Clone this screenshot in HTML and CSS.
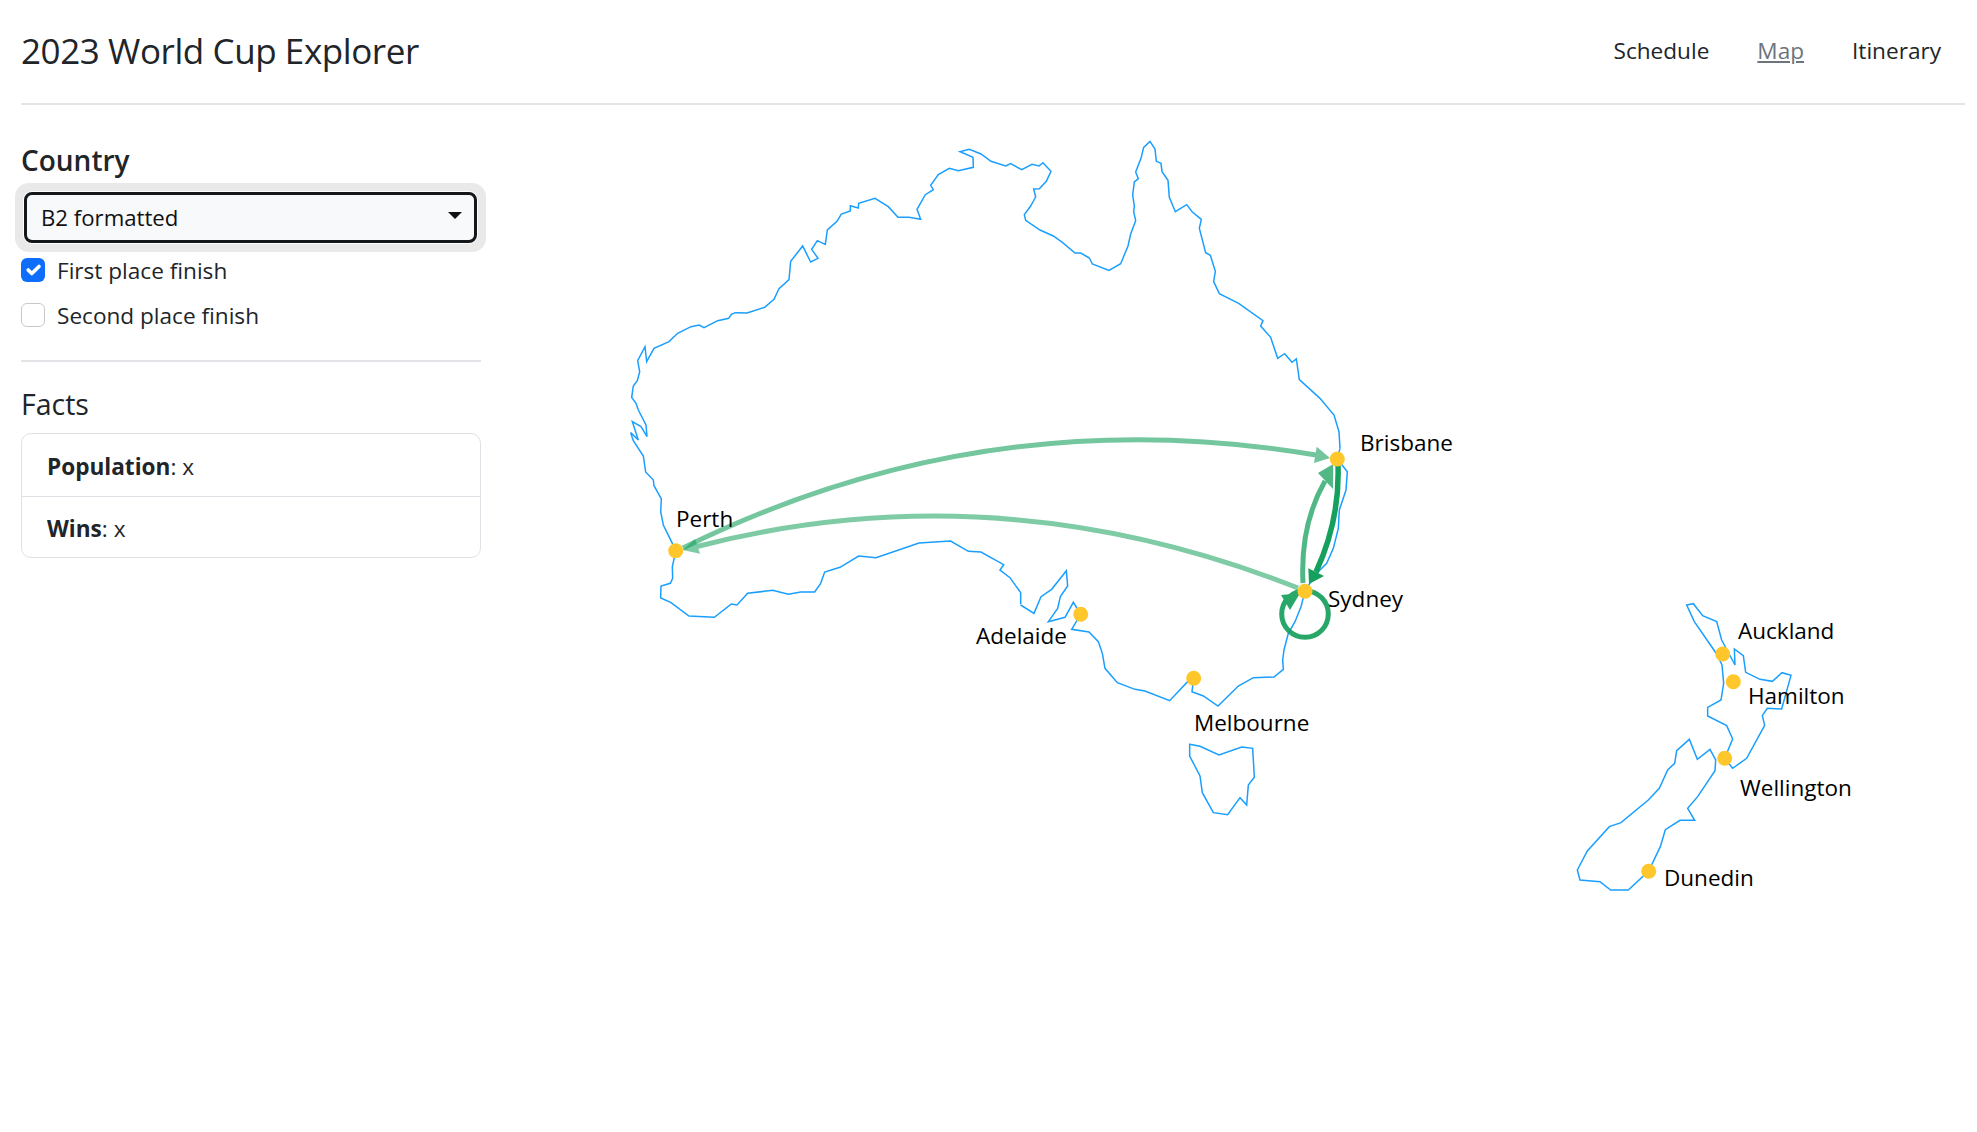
FILE: index.html

```html
<!DOCTYPE html>
<html lang="en">
<head>
  <meta charset="UTF-8">
  <meta name="viewport" content="width=device-width, initial-scale=1.0">
  <title>2023 World Cup Explorer</title>
  <link rel="stylesheet" href="styles.css">
</head>
<body>
  <header class="topbar">
    <div class="brand">2023 World Cup Explorer</div>
    <nav class="nav">
      <a href="#" class="nav-link">Schedule</a>
      <a href="#" class="nav-link active">Map</a>
      <a href="#" class="nav-link">Itinerary</a>
    </nav>
  </header>

  <div class="page">
    <aside class="sidebar">
      <h2 class="country-title">Country</h2>
      <div class="select-ring">
        <div class="select-box">
          <span>B2 formatted</span>
          <span class="caret"></span>
        </div>
      </div>
      <div class="check checked">
        <span class="check-box">
          <svg viewBox="0 0 20 20" width="24" height="24"><path d="M6 10l3 3l6-6" fill="none" stroke="#fff" stroke-width="3" stroke-linecap="round" stroke-linejoin="round"/></svg>
        </span>
        <label>First place finish</label>
      </div>
      <div class="check">
        <span class="check-box"></span>
        <label>Second place finish</label>
      </div>
      <hr class="divider">
      <h3 class="facts-title">Facts</h3>
      <ul class="facts">
        <li><strong>Population</strong>: x</li>
        <li><strong>Wins</strong>: x</li>
      </ul>
    </aside>

    <svg class="map" viewBox="500 105 1465 900" width="1465" height="900">
      <!-- traced in pieces, each piece in its own zoomed coordinates -->
      <g class="coast">
        <g transform="translate(610 130) scale(.33333)">
          <polyline points="62,908 85,930 67,875 93,890 111,920 108,885 85,840 78,820 65,802 70,768 82,752 89,725 83,692 105,650 110,695 132,655 177,635 203,610 243,590 268,585 282,593 323,572 356,565 364,553 376,548 411,549 464,532 492,508 507,476 537,449 542,394 578,348 602,396 624,385 605,358 622,332 646,343 652,300 681,274 694,252 721,243 721,227 745,234 746,220 795,205 835,230 864,262 897,262 932,268 921,238 946,194 970,179 962,166 985,134 1018,115 1045,122 1090,112 1089,82 1050,65 1078,58 1113,72 1143,94 1187,108 1202,101 1235,119 1266,103 1287,108 1299,98 1323,124 1309,154 1288,176 1271,177 1277,201 1262,228 1243,254 1247,271 1290,300 1330,318 1358,338 1395,369 1412,369 1438,384"/>
        </g>
        <g transform="translate(1000 130) scale(.33333)">
          <polyline points="268,384 277,402 327,421 362,401 384,348 392,312 407,272 401,245 403,228 398,195 403,156 415,146 407,126 423,85 431,52 450,34 465,57 469,94 483,100 486,125 504,151 508,202 526,245 560,224 577,246 604,268 598,295 617,368 631,376 646,424 641,455 658,491 716,520 789,572 782,588 812,622 833,685 854,671 876,697 889,687 898,749 960,805 1002,855 1017,905 1020,955"/>
        </g>
        <g transform="translate(1020 420) scale(.33333)">
          <polyline points="960,85 952,117 982,155 978,210 958,270 955,325 940,385 920,430 885,465 855,513 843,560 825,605 805,640 792,690 788,720 790,748 762,771 700,773 655,798 594,858 550,828 516,815 521,775 500,788 449,842 375,813 345,808 292,788 255,745 247,700 235,665 207,636 155,628 182,583 160,547 135,592 85,605 113,565 121,530 143,498 139,452 95,508 63,530 42,580 2,555"/>
          <polygon points="509,973 540,979 597,1005 665,981 698,985 703,1072 685,1095 680,1155 660,1133 623,1184 580,1178 547,1118 540,1068 509,1008"/>
        </g>
        <g transform="translate(610 420) scale(.33333)">
          <polyline points="1232,553 1232,518 1200,473 1170,450 1181,434 1113,396 1075,394 1022,363 927,369 798,413 746,408 690,442 644,456 632,490 614,516 572,516 535,523 488,511 413,520 381,555 364,552 313,592 237,588 182,547 152,534 153,498 181,490 188,475 187,440 193,413 197,392 187,370 160,315 152,275 154,237 132,197 130,180 107,156 100,108 70,62 62,38"/>
        </g>
        <g transform="translate(1560 580) scale(.33333)">
          <polygon points="380,75 400,71 428,107 470,125 485,180 525,255 523,207 550,227 557,277 600,298 637,304 666,278 693,286 665,387 622,385 607,407 614,436 560,535 518,565 494,535 518,477 500,437 443,408 443,382 483,360 491,310 486,255 470,222 403,125"/>
          <polygon points="388,478 412,538 450,508 467,540 465,572 413,650 383,685 404,721 360,721 316,749 301,800 266,873 205,930 152,930 120,905 60,900 52,870 82,813 148,740 183,728 265,660 298,625 323,570 344,550 350,512"/>
        </g>
      </g>

      <g class="route route-perth-bris">
        <path d="M683 548Q985 399 1316 455"/>
        <polygon points="1330,458 1316.700,446.700 1314,463"/>
      </g>
      <g class="route route-syd-perth">
        <path d="M1298 588Q998 469 695 547"/>
        <polygon points="682.700,550 700,553.700 695,539"/>
      </g>
      <g class="route route-syd-bris">
        <path d="M1303 583Q1300 525 1325 481"/>
        <polygon points="1333.300,464 1318,473 1333,489"/>
      </g>
      <g class="route route-bris-syd">
        <path d="M1338 465Q1340 520 1316 572"/>
        <polygon points="1309,584 1324,576 1308.300,568.300"/>
      </g>
      <g class="route route-loop">
        <circle cx="1305" cy="614" r="23.300"/>
        <polygon points="1300,593.300 1281,595 1290,610"/>
      </g>

      <g class="cities">
        <circle cx="675.700" cy="550.700" r="7.500"/>
        <circle cx="1080.700" cy="614.300" r="7.500"/>
        <circle cx="1193.700" cy="678.300" r="7.500"/>
        <circle cx="1305" cy="591.300" r="7.500"/>
        <circle cx="1337.300" cy="459" r="7.500"/>
        <circle cx="1722.700" cy="654" r="7.500"/>
        <circle cx="1733.300" cy="681.700" r="7.500"/>
        <circle cx="1724.700" cy="758.300" r="7.500"/>
        <circle cx="1648.700" cy="871.300" r="7.500"/>
      </g>

      <g class="labels">
        <text x="676" y="527">Perth</text>
        <text x="976" y="644">Adelaide</text>
        <text x="1194" y="731">Melbourne</text>
        <text x="1328" y="607">Sydney</text>
        <text x="1360" y="451">Brisbane</text>
        <text x="1738" y="639">Auckland</text>
        <text x="1748" y="704">Hamilton</text>
        <text x="1740" y="796">Wellington</text>
        <text x="1664" y="886">Dunedin</text>
      </g>
    </svg>
  </div>
</body>
</html>
```

FILE: styles.css

```css
* { box-sizing: border-box; }
body { margin: 0; font-family: "Open Sans", "Noto Sans", sans-serif; font-size: 22.6px; color: #212529; background: #fff; }

.topbar { display: flex; justify-content: space-between; align-items: center; height: 105px; margin: 0 12px 0 21px; border-bottom: 2px solid #e3e4e8; }
.brand { font-size: 35px; letter-spacing: -0.012em; padding-bottom: 2px; }
.nav { display: flex; padding-bottom: 2px; }
.nav-link { padding: 0 24px; color: #212529; text-decoration: none; }
.nav-link.active { color: #6c757d; text-decoration: underline; }

.page { display: flex; }
.sidebar { flex: 0 0 460px; min-width: 0; margin-left: 21px; padding-top: 36px; }
.map { margin-left: 19px; display: block; }

.country-title { margin: 0 0 4px; font-size: 28px; font-weight: 600; line-height: 38px; }
.select-ring { margin-left: -6px; width: 471px; padding: 9px; background: #e9e9e9; border-radius: 14px; }
.select-box { display: flex; justify-content: space-between; align-items: center; height: 51px; padding: 0 14px; background: #f8f9fa; border: 3px solid #15181b; border-radius: 8px; color: #111; font-size: 22.2px; box-shadow: 0 0 0 1px #fff; }
.caret { width: 0; height: 0; margin-right: -2px; margin-top: -4px; border-left: 7px solid transparent; border-right: 7px solid transparent; border-top: 7px solid #111; }

.check { display: flex; align-items: center; height: 36px; gap: 12px; margin-top: 9px; }
.check.checked { margin-top: 0; }
.check-box { flex: none; width: 24px; height: 24px; border: 1px solid #c6c9cc; border-radius: 6px; background: #fff; }
.check.checked .check-box { background: #0d6efd; border: 0; }
.check-box svg { display: block; }

.divider { margin: 27px 0 0; border: 0; border-top: 2px solid #e3e4e8; }
.facts-title { margin: 24px 0 11px; font-size: 28.5px; font-weight: 500; line-height: 36px; }
.facts { margin: 0; padding: 0; list-style: none; border: 1px solid #dee2e6; border-radius: 10px; }
.facts li { height: 62px; line-height: 65px; padding: 0 25px; }
.facts li + li { height: 61px; line-height: 64px; border-top: 1px solid #dee2e6; }
.facts strong { font-weight: 700; }

.coast polyline, .coast polygon { fill: none; stroke: #1a9fff; stroke-width: 1.5; vector-effect: non-scaling-stroke; }
.route path, .route circle { fill: none; stroke: #16a05d; stroke-width: 5; }
.route polygon { fill: #16a05d; }
.route-perth-bris { opacity: .6; }
.route-syd-perth { opacity: .55; }
.route-syd-bris { opacity: .75; }
.route-bris-syd { opacity: 1; }
.route-bris-syd path { stroke-width: 5.5; }
.route-loop { opacity: .92; }
.cities circle { fill: #ffc72c; }
.labels text { font-size: 22.5px; fill: #000; }
```
